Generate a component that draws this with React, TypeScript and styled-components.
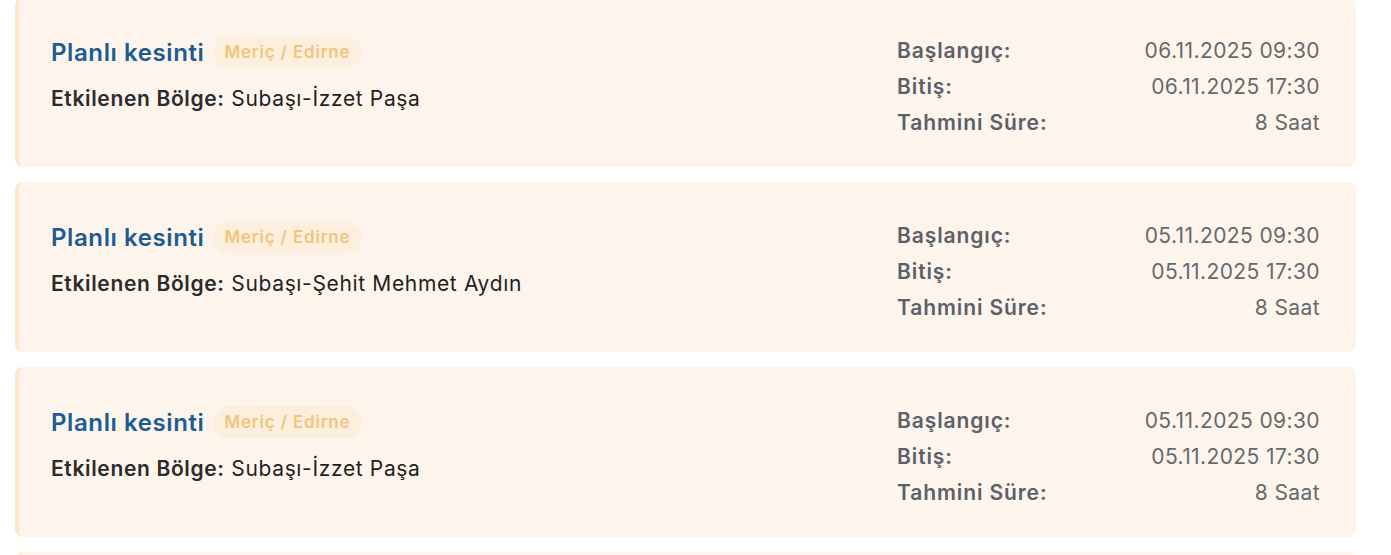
import React from "react";
import styled, { createGlobalStyle } from "styled-components";

const GlobalStyle = createGlobalStyle`
  html, body { margin: 0; padding: 0; background: #ffffff; }
  body { font-family: Inter, "Noto Sans", "Liberation Sans", sans-serif; overflow: hidden; }
`;

const Page = styled.div`
  padding: 0 35px 0 15px;
  margin-top: -3px;
`;

const List = styled.div`
  display: flex;
  flex-direction: column;
  gap: 15px;
`;

const Card = styled.div`
  display: flex;
  justify-content: space-between;
  height: 170px;
  box-sizing: border-box;
  background: #fdf5eb;
  border-left: 4px solid #fde7c8;
  border-radius: 8px;
  padding: 0 36px 0 32px;
`;

const Left = styled.div`
  display: flex;
  flex-direction: column;
  padding-top: 39px;
  gap: 17px;
`;

const TitleRow = styled.div`
  display: flex;
  align-items: center;
  gap: 9px;
  height: 32px;
`;

const Title = styled.span`
  font-size: 24px;
  font-weight: 600;
  color: #1e5b93;
  letter-spacing: 0.6px;
`;

const Badge = styled.span`
  display: inline-flex;
  align-items: center;
  height: 32px;
  padding: 0 12px 0 11px;
  border-radius: 16px;
  background: #fcefdd;
  color: #f1c57f;
  font-size: 17px;
  font-weight: 600;
  letter-spacing: 0.8px;
`;

const Region = styled.div`
  font-size: 21px;
  line-height: 28px;
  color: #1f1f1f;
  letter-spacing: 0.65px;
`;

const RegionLabel = styled.span`
  font-weight: 600;
  color: #2b2b2b;
`;

const Right = styled.div`
  display: grid;
  grid-template-columns: auto 1fr;
  grid-auto-rows: 36px;
  align-items: center;
  width: 423px;
  padding-top: 35px;
  align-self: flex-start;
`;

const Label = styled.span`
  font-size: 21px;
  font-weight: 600;
  color: #5c6068;
  letter-spacing: 0.9px;
`;

const Value = styled.span`
  font-size: 21px;
  color: #66696e;
  text-align: right;
  letter-spacing: 0.4px;
`;

type Outage = {
  region: string;
  start: string;
  end: string;
  duration: string;
};

const outages: Outage[] = [
  { region: "Subaşı-İzzet Paşa", start: "06.11.2025 09:30", end: "06.11.2025 17:30", duration: "8 Saat" },
  { region: "Subaşı-Şehit Mehmet Aydın", start: "05.11.2025 09:30", end: "05.11.2025 17:30", duration: "8 Saat" },
  { region: "Subaşı-İzzet Paşa", start: "05.11.2025 09:30", end: "05.11.2025 17:30", duration: "8 Saat" },
  { region: "Subaşı", start: "04.11.2025 09:30", end: "04.11.2025 17:30", duration: "8 Saat" },
];

export default function App() {
  return (
    <>
      <GlobalStyle />
      <Page>
        <List>
          {outages.map((o, i) => (
            <Card key={i}>
              <Left>
                <TitleRow>
                  <Title>Planlı kesinti</Title>
                  <Badge>Meriç / Edirne</Badge>
                </TitleRow>
                <Region>
                  <RegionLabel>Etkilenen Bölge:</RegionLabel> {o.region}
                </Region>
              </Left>
              <Right>
                <Label>Başlangıç:</Label>
                <Value>{o.start}</Value>
                <Label>Bitiş:</Label>
                <Value>{o.end}</Value>
                <Label>Tahmini Süre:</Label>
                <Value>{o.duration}</Value>
              </Right>
            </Card>
          ))}
        </List>
      </Page>
    </>
  );
}
